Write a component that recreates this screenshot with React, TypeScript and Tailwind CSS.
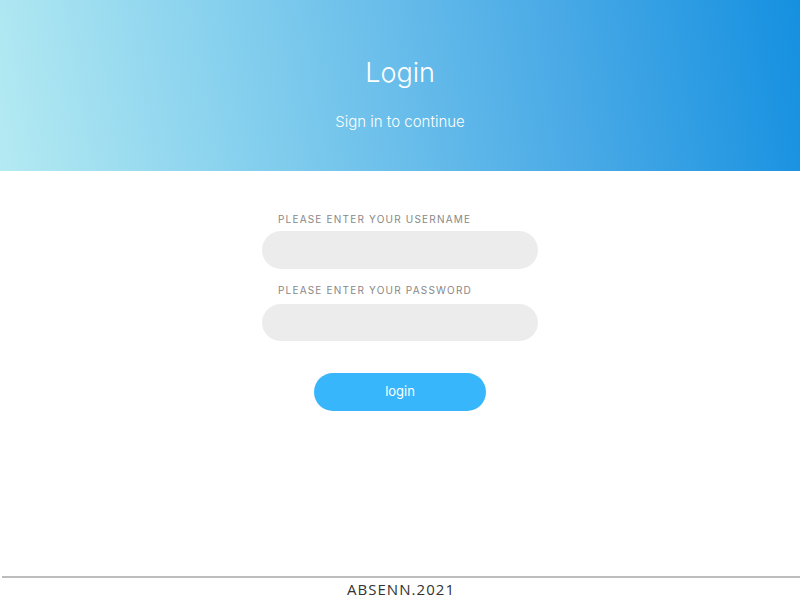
export default function App() {
  return (
    <div className="min-h-screen flex flex-col bg-white font-['Inter',sans-serif]">
      {/* Header */}
      <div className="h-[171px] flex flex-col items-center bg-[linear-gradient(80deg,#b4eaf2_0%,#86d0ee_30%,#4aaae6_70%,#1590e0_100%)] text-white">
        <h1 className="mt-[54px] text-[27px] leading-[38px] font-light">Login</h1>
        <p className="mt-[20px] text-[15px] leading-5 font-light">Sign in to continue</p>
      </div>

      {/* Form */}
      <div className="w-[276px] mx-auto mt-[42px] flex flex-col">
        <label className="px-4 text-[10px] leading-3 tracking-[0.12em] text-[#888888]">
          PLEASE ENTER YOUR USERNAME
        </label>
        <input
          type="text"
          className="mt-[6px] h-[38px] w-full rounded-full bg-[#ececec] px-4 outline-none"
        />
        <label className="mt-[15px] px-4 text-[10px] leading-3 tracking-[0.12em] text-[#888888]">
          PLEASE ENTER YOUR PASSWORD
        </label>
        <input
          type="password"
          className="mt-[8px] h-[37px] w-full rounded-full bg-[#ececec] px-4 outline-none"
        />
        <button className="mt-[32px] mx-auto h-[38px] w-[172px] rounded-full bg-[#38b6fc] text-white text-[13px]">
          login
        </button>
      </div>

      {/* Footer */}
      <div className="mt-auto pl-[2px]">
        <div className="h-[2px] bg-[#bdbdbd]" />
        <p className="text-center text-[15px] leading-[22px] tracking-[0.07em] text-[#333] font-['Open_Sans',sans-serif]">
          ABSENN.2021
        </p>
      </div>
    </div>
  );
}
